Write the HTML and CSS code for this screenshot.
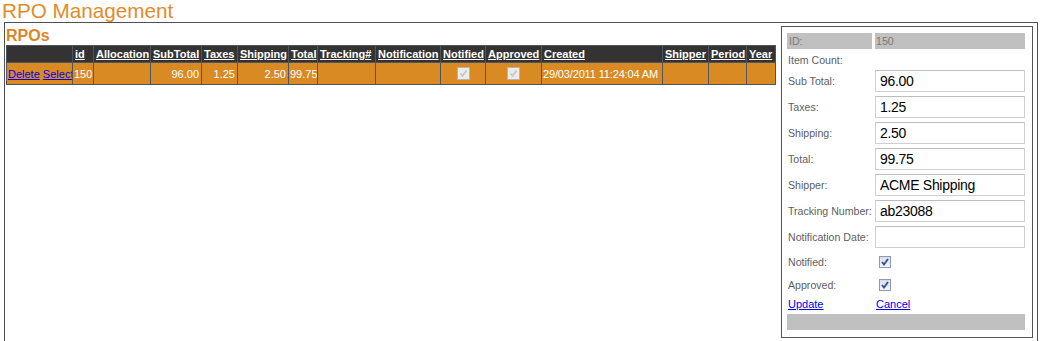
FILE: index.html
```html
<!DOCTYPE html>
<html lang="en">
<head>
    <meta charset="UTF-8">
    <title>RPO Management</title>
    <link rel="stylesheet" href="styles.css">
</head>
<body>
    <h1 class="page-title">RPO Management</h1>
    <div class="page-box">
        <div class="list-area">
            <h2 class="list-title">RPOs</h2>
            <table class="grid">
                <colgroup>
                    <col class="w66"><col class="w21"><col class="w57"><col class="w51"><col class="w36">
                    <col class="w51"><col class="w29"><col class="w58"><col class="w65"><col class="w45">
                    <col class="w56"><col class="w121"><col class="w46"><col class="w38"><col class="w29">
                </colgroup>
                <tr class="grid-head">
                    <th></th>
                    <th><a href="#">id</a></th>
                    <th><a href="#">Allocation</a></th>
                    <th><a href="#">SubTotal</a></th>
                    <th><a href="#">Taxes</a></th>
                    <th><a href="#">Shipping</a></th>
                    <th><a href="#">Total</a></th>
                    <th><a href="#">Tracking#</a></th>
                    <th><a href="#">Notification</a></th>
                    <th><a href="#">Notified</a></th>
                    <th><a href="#">Approved</a></th>
                    <th><a href="#">Created</a></th>
                    <th><a href="#">Shipper</a></th>
                    <th><a href="#">Period</a></th>
                    <th><a href="#">Year</a></th>
                </tr>
                <tr class="grid-row">
                    <td class="actions"><a href="#">Delete</a> <a href="#">Select</a></td>
                    <td>150</td>
                    <td></td>
                    <td class="num">96.00</td>
                    <td class="num">1.25</td>
                    <td class="num">2.50</td>
                    <td>99.75</td>
                    <td></td>
                    <td></td>
                    <td class="mid"><span class="chk chk-off"><svg width="11" height="11" viewBox="0 0 11 11"><path d="M2.5 5.5 L4.5 8 L8.5 2.5" fill="none" stroke="#c4c4c4" stroke-width="1.6"/></svg></span></td>
                    <td class="mid"><span class="chk chk-off"><svg width="11" height="11" viewBox="0 0 11 11"><path d="M2.5 5.5 L4.5 8 L8.5 2.5" fill="none" stroke="#c4c4c4" stroke-width="1.6"/></svg></span></td>
                    <td class="date">29/03/2011 11:24:04 AM</td>
                    <td></td>
                    <td></td>
                    <td></td>
                </tr>
            </table>
        </div>

        <div class="detail-panel">
            <div class="form-grid">
                <div class="lbl row-id shaded">ID:</div>
                <div class="val row-id shaded">150</div>

                <div class="lbl row-text">Item Count:</div>
                <div class="val row-text"></div>

                <div class="lbl row-input">Sub Total:</div>
                <div class="val row-input"><input class="field" type="text" value="96.00"></div>

                <div class="lbl row-input">Taxes:</div>
                <div class="val row-input"><input class="field" type="text" value="1.25"></div>

                <div class="lbl row-input">Shipping:</div>
                <div class="val row-input"><input class="field" type="text" value="2.50"></div>

                <div class="lbl row-input">Total:</div>
                <div class="val row-input"><input class="field" type="text" value="99.75"></div>

                <div class="lbl row-input">Shipper:</div>
                <div class="val row-input"><input class="field" type="text" value="ACME Shipping"></div>

                <div class="lbl row-input">Tracking Number:</div>
                <div class="val row-input"><input class="field" type="text" value="ab23088"></div>

                <div class="lbl row-input">Notification Date:</div>
                <div class="val row-input"><input class="field" type="text" value=""></div>

                <div class="lbl row-check">Notified:</div>
                <div class="val row-check"><span class="chk chk-on"><svg width="10" height="10" viewBox="0 0 10 10"><path d="M2 5 L4 7.5 L8 2" fill="none" stroke="#2d4f9e" stroke-width="1.8"/></svg></span></div>

                <div class="lbl row-check">Approved:</div>
                <div class="val row-check"><span class="chk chk-on"><svg width="10" height="10" viewBox="0 0 10 10"><path d="M2 5 L4 7.5 L8 2" fill="none" stroke="#2d4f9e" stroke-width="1.8"/></svg></span></div>

                <div class="lbl row-links"><a href="#">Update</a></div>
                <div class="val row-links"><a href="#">Cancel</a></div>

                <div class="footer-bar"></div>
            </div>
        </div>
    </div>
</body>
</html>
```

FILE: styles.css
```css
body {
    margin: 0;
    font-family: "Liberation Sans", Arial, sans-serif;
    font-size: 11px;
    color: #333;
    background-color: #fff;
    overflow: hidden;
}
a {
    color: #0000ee;
}
.page-title {
    margin: 0 0 0 2px;
    font-size: 20.7px;
    line-height: 22px;
    font-weight: normal;
    color: #e38b2c;
}
.page-box {
    display: flex;
    align-items: flex-start;
    margin: 0 2px 0 4px;
    height: 330px;
    padding: 0 4px 0 1px;
    border: 1px solid #505050;
}
.list-area {
    flex: 1;
    min-width: 0;
}
.list-title {
    margin: 0;
    padding-top: 3px;
    font-size: 16px;
    line-height: 19px;
    color: #d9862a;
}

/* grid de RPOs */
.grid {
    table-layout: fixed;
    width: 770px;
    border-collapse: collapse;
    border: 1px solid #4f5560;
}
.w21 { width: 21px; }
.w29 { width: 29px; }
.w36 { width: 36px; }
.w38 { width: 38px; }
.w45 { width: 45px; }
.w46 { width: 46px; }
.w51 { width: 51px; }
.w56 { width: 56px; }
.w57 { width: 57px; }
.w58 { width: 58px; }
.w65 { width: 65px; }
.w66 { width: 66px; }
.w121 { width: 121px; }
.grid th, .grid td {
    border: 1px solid #4f5560;
    padding: 0 2px;
    white-space: nowrap;
    overflow: hidden;
    text-align: left;
}
.grid-head th {
    background-color: #333;
    height: 16px;
    line-height: 14px;
    font-size: 11px;
}
.grid-head th a {
    color: #fff;
}
.grid-row td {
    background-color: #d98a22;
    color: #fff;
    height: 21px;
    font-size: 11px;
    padding: 0 1px;
}
.grid-row td.num {
    padding-right: 2px;
    text-align: right;
}
.grid-row td.mid {
    text-align: center;
}
.grid-row td.date {
    letter-spacing: -0.15px;
}

/* checkboxes */
.chk {
    display: inline-flex;
    align-items: center;
    justify-content: center;
    box-sizing: border-box;
    vertical-align: middle;
}
.chk-off {
    width: 13px;
    height: 13px;
    border: 1px solid #b4b4b4;
    background-color: #ececec;
}
.chk-on {
    width: 12px;
    height: 12px;
    margin-left: 4px;
    border: 1px solid #8b9bb6;
    background: linear-gradient(#dcdde6, #f4f4f8);
}

/* panel de detalle */
.detail-panel {
    flex-shrink: 0;
    box-sizing: border-box;
    width: 252px;
    height: 312px;
    margin-top: 3px;
    padding: 6px 6px 6px 5px;
    border: 1px solid #555;
}
.form-grid {
    display: grid;
    grid-template-columns: 85px 150px;
    column-gap: 3px;
    row-gap: 4px;
}
.lbl, .val {
    display: flex;
    align-items: center;
    font-size: 10.6px;
    color: #5e5e5e;
    white-space: nowrap;
}
.lbl {
    padding-left: 1px;
}
.row-id {
    height: 16px;
}
.row-text {
    height: 13px;
}
.row-input {
    height: 22px;
}
.row-check {
    height: 19px;
}
.row-links {
    height: 12px;
    font-size: 11px;
}
.shaded {
    background-color: #c0c0c0;
    color: #7a7a7a;
}
.lbl.shaded {
    padding-left: 2px;
}
.val.shaded {
    padding-left: 1px;
}
.row-links.val {
    padding-left: 1px;
}
.field {
    box-sizing: border-box;
    width: 150px;
    height: 22px;
    margin: 0;
    padding: 0 4px;
    border: 1px solid #cfcfcf;
    border-top-color: #bdbdbd;
    font-family: "Liberation Sans", Arial, sans-serif;
    font-size: 14px;
    letter-spacing: -0.3px;
    color: #000;
    background-color: #fff;
}
.footer-bar {
    grid-column: 1 / 3;
    height: 16px;
    background-color: #c0c0c0;
}
```
